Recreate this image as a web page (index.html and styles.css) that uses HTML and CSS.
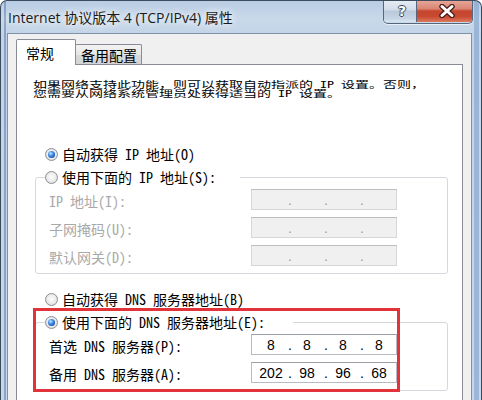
FILE: index.html
```html
<!DOCTYPE html>
<html lang="zh-CN">
<head>
<meta charset="utf-8">
<title>Internet 协议版本 4 (TCP/IPv4) 属性</title>
<link rel="stylesheet" href="styles.css">
</head>
<body>
<div class="window">
  <div class="titlebar">
    <div class="title">Internet 协议版本 4 (TCP/IPv4) 属性</div>
    <div class="caption-btns">
      <div class="cbtn help"><span>?</span></div>
      <div class="cbtn close">
        <svg width="18" height="14" viewBox="0 0 18 14">
          <path d="M4 2.5 L14 11.5 M14 2.5 L4 11.5" stroke="#4a1e1a" stroke-width="5.5" stroke-linecap="round"/>
          <path d="M4 2.5 L14 11.5 M14 2.5 L4 11.5" stroke="#ffffff" stroke-width="3" stroke-linecap="round"/>
        </svg>
      </div>
    </div>
  </div>
  <div class="client">
    <div class="tabs">
      <div class="tab active">常规</div>
      <div class="tab">备用配置</div>
    </div>
    <div class="panel">
      <p class="intro"><span class="line">如果网络支持此功能，则可以获取自动指派的 IP 设置。否则，</span><span class="line">您需要从网络系统管理员处获得适当的 IP 设置。</span></p>

      <div class="option first"><span class="radio on"></span>自动获得 IP 地址(O)</div>

      <fieldset class="group g1">
        <legend><span class="option"><span class="radio"></span>使用下面的 IP 地址(S):</span></legend>
        <div class="rows">
          <div class="row off"><span class="lbl">IP 地址(I):</span><span class="ip"><span class="oct"></span><span class="dot">.</span><span class="oct"></span><span class="dot">.</span><span class="oct"></span><span class="dot">.</span><span class="oct"></span></span></div>
          <div class="row off"><span class="lbl">子网掩码(U):</span><span class="ip"><span class="oct"></span><span class="dot">.</span><span class="oct"></span><span class="dot">.</span><span class="oct"></span><span class="dot">.</span><span class="oct"></span></span></div>
          <div class="row off"><span class="lbl">默认网关(D):</span><span class="ip"><span class="oct"></span><span class="dot">.</span><span class="oct"></span><span class="dot">.</span><span class="oct"></span><span class="dot">.</span><span class="oct"></span></span></div>
        </div>
      </fieldset>

      <div class="option third"><span class="radio"></span>自动获得 DNS 服务器地址(B)</div>

      <fieldset class="group g2">
        <legend><span class="option"><span class="radio on"></span>使用下面的 DNS 服务器地址(E):</span></legend>
        <div class="rows">
          <div class="row"><span class="lbl">首选 DNS 服务器(P):</span><span class="ip"><span class="oct">8</span><span class="dot">.</span><span class="oct">8</span><span class="dot">.</span><span class="oct">8</span><span class="dot">.</span><span class="oct">8</span></span></div>
          <div class="row"><span class="lbl">备用 DNS 服务器(A):</span><span class="ip"><span class="oct">202</span><span class="dot">.</span><span class="oct">98</span><span class="dot">.</span><span class="oct">96</span><span class="dot">.</span><span class="oct">68</span></span></div>
        </div>
      </fieldset>

      <div class="mark"></div>
    </div>
  </div>
</div>
</body>
</html>
```

FILE: styles.css
```css
html, body {
  margin: 0;
  padding: 0;
}
body {
  width: 482px;
  height: 400px;
  overflow: hidden;
  background: #ffffff;
}
.window {
  width: 482px;
  height: 400px;
  display: flex;
  flex-direction: column;
  box-sizing: border-box;
  border-radius: 7px 7px 0 0;
  border: 1px solid #3d4b5e;
  border-bottom: none;
  background:
    linear-gradient(90deg, rgba(0,0,0,0) 3px, rgba(100,130,175,0.6) 3px, rgba(100,130,175,0.6) 5px, rgba(0,0,0,0) 5px),
    linear-gradient(270deg, rgba(0,0,0,0) 2px, rgba(120,155,200,0.55) 2px, rgba(120,155,200,0.55) 7px, rgba(0,0,0,0) 7px),
    linear-gradient(180deg, #b8cce3 0, #c9d9ea 18px, #c3d4e8 34px, #c6d7ea 100%);
  overflow: hidden;
  font-family: "Noto Sans Mono CJK SC", "Noto Sans CJK SC", sans-serif;
  color: #000;
}
.titlebar {
  height: 32px;
  flex: none;
  display: flex;
  align-items: flex-start;
}
.title {
  padding: 7px 0 0 7px;
  font-family: "Open Sans", "Noto Sans CJK SC", sans-serif;
  font-size: 14px;
  line-height: 19px;
  color: #1b1b1b;
  text-shadow: 0 0 6px rgba(255,255,255,0.95), 0 0 10px rgba(255,255,255,0.8);
  white-space: nowrap;
}
.caption-btns {
  margin-left: auto;
  margin-right: 8px;
  margin-top: -1px;
  display: flex;
  height: 23px;
  border: 1px solid #56667c;
  border-top: none;
  border-radius: 0 0 5px 5px;
  overflow: hidden;
  box-shadow: 0 1px 0 rgba(255,255,255,0.6);
}
.cbtn {
  height: 22px;
  display: flex;
  align-items: center;
  justify-content: center;
}
.help {
  width: 32px;
  border-right: 1px solid #56667c;
  background: linear-gradient(180deg, #e6edf5 0, #d3dde9 45%, #b9c8da 50%, #c7d5e6 85%, #d8e4f0 100%);
}
.help span {
  font-family: "DejaVu Sans", sans-serif;
  font-weight: bold;
  font-size: 14px;
  line-height: 14px;
  color: #ffffff;
  margin-left: 4px;
  text-shadow: 1px 0 0 #3c4656, -1px 0 0 #3c4656, 0 1px 0 #3c4656, 0 -1px 0 #3c4656;
}
.close {
  width: 55px;
  background: linear-gradient(180deg, #e9a99c 0, #d98574 40%, #c7452f 50%, #c84a32 75%, #dc7a5e 100%);
}
.close svg {
  margin-left: 4px;
}
.client {
  height: 390px;
  flex: none;
  margin: 0 9px 0 6px;
  box-sizing: border-box;
  border: 1px solid #8092aa;
  border-bottom: none;
  background: #f0f0f0;
  padding: 5px 8px 0 8px;
  display: flex;
  flex-direction: column;
}
.tabs {
  display: flex;
  align-items: flex-end;
  height: 26px;
  margin-bottom: -1px;
  flex: none;
}
.tab {
  box-sizing: border-box;
  border: 1px solid #898c95;
  border-bottom: none;
  font-size: 14px;
  white-space: nowrap;
}
.tab.active {
  position: relative;
  z-index: 1;
  width: 60px;
  height: 26px;
  background: #ffffff;
  padding: 3px 0 0 9px;
  line-height: 20px;
  border-radius: 2px 2px 0 0;
}
.tab:not(.active) {
  width: 67px;
  height: 21px;
  margin-left: -1px;
  padding: 1px 0 0 5px;
  line-height: 18px;
  background: linear-gradient(180deg, #f3f3f3 0, #e6e6e6 50%, #d9d9d9 51%, #d3d3d3 100%);
  border-radius: 2px 2px 0 0;
}
.panel {
  position: relative;
  flex: 1;
  background: #ffffff;
  border: 1px solid #898c95;
  padding: 0 14px 0 16px;
  font-size: 14px;
}
.intro {
  margin: 15px 0 46px;
  display: flex;
  flex-direction: column;
  white-space: nowrap;
}
.intro .line {
  display: block;
  height: 9px;
  font-size: 14px;
  line-height: 13px;
  transform: scaleY(0.68);
  transform-origin: 0 0;
}
.option {
  display: flex;
  align-items: center;
  white-space: nowrap;
  height: 20px;
}
.option.first {
  padding-left: 12px;
}
.option.third {
  padding-left: 12px;
  margin-top: 15px;
}
.radio {
  flex: none;
  width: 13px;
  height: 13px;
  box-sizing: border-box;
  border-radius: 50%;
  border: 1px solid #8d9094;
  background: radial-gradient(circle at 50% 45%, #fdfdfd 0, #eeeeee 45%, #d2d2d2 100%);
  margin-right: 4px;
}
.radio.on::after {
  content: "";
  display: block;
  width: 7px;
  height: 7px;
  margin: 2px;
  border-radius: 50%;
  background: radial-gradient(circle at 38% 35%, #c9e6ff 0, #4a97ea 35%, #1753b4 75%, #0d3d8c 100%);
}
.group {
  margin: 3px 0 0 2px;
  padding: 0 50px 7px 9px;
  border: 1px solid #d5d9de;
  border-radius: 3px;
  min-width: 0;
}
.group legend {
  padding: 0 24px 0 0;
  height: 20px;
}
.g2 legend {
  padding-right: 28px;
}
.rows {
  display: flex;
  flex-direction: column;
  gap: 7px;
  padding-left: 4px;
  margin-top: 2px;
}
.row {
  display: flex;
  align-items: center;
  height: 21px;
}
.lbl {
  flex: 1;
  white-space: nowrap;
  padding-top: 4px;
  line-height: 15px;
}
.row.off .lbl {
  color: #a9a9a9;
}
.ip {
  flex: none;
  width: 146px;
  height: 21px;
  box-sizing: border-box;
  border: 1px solid #b8bcc2;
  border-top-color: #9a9ea5;
  background: #ffffff;
  display: flex;
  align-items: center;
  padding-left: 5px;
  font-family: "Liberation Sans", Arial, sans-serif;
  font-size: 14px;
}
.row.off .ip {
  background: #f0f0f0;
  border-color: #d6d6d6;
  border-top-color: #bdbdbd;
  color: #a0a0a0;
}
.oct {
  width: 28px;
  text-align: center;
}
.dot {
  width: 8px;
  text-align: center;
  padding-left: 2px;
  box-sizing: border-box;
}
.mark {
  position: absolute;
  left: 16px;
  top: 243px;
  width: 367px;
  height: 84px;
  box-sizing: border-box;
  border: 3px solid #e2333a;
  pointer-events: none;
}
```
